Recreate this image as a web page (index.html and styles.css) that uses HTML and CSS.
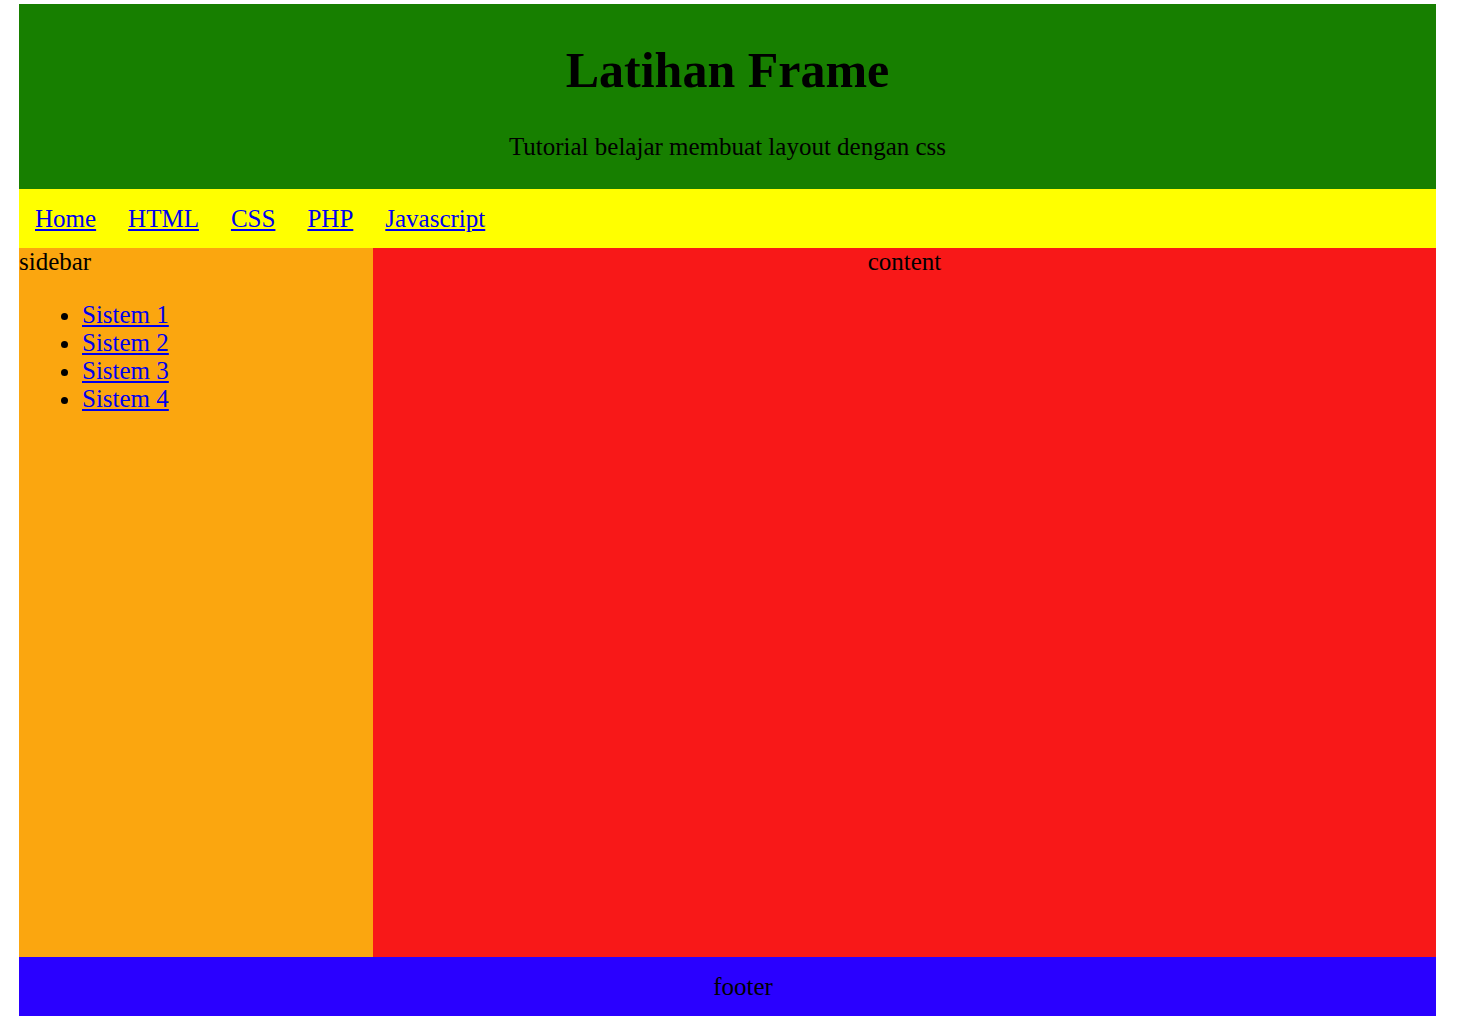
FILE: index.html
```html
<!DOCTYPE html>
<html lang="id">

<head>
    <meta charset="UTF-8">
    <meta name="viewport" content="width=device-width, initial-scale=1.0">
    <title>Latihan Frame</title>
    <link rel="stylesheet" href="styles.css">
</head>

<body>
    <div class="container">
        <div class="header">
            <h1>Latihan Frame</h1>
            <p>Tutorial belajar membuat layout dengan css</p>
        </div>
        <div class="menu">
            <a href="#">Home</a>
            <a href="#">HTML</a>
            <a href="#">CSS</a>
            <a href="#">PHP</a>
            <a href="#">Javascript</a>
        </div>
        <div class="main">
            <div class="sidebar">
                sidebar
                <ul>
                    <li><a href="#">Sistem 1</a></li>
                    <li><a href="#">Sistem 2</a></li>
                    <li><a href="#">Sistem 3</a></li>
                    <li><a href="#">Sistem 4</a></li>
                </ul>
            </div>
            <div class="content">content</div>
        </div>
        <div class="footer">footer</div>
    </div>
</body>

</html>
```

FILE: styles.css
```css
body {
    font-family: "Liberation Serif", "Times New Roman", serif;
    font-size: 25px;
    margin: 0;
    padding: 4px 21px 0 19px;
}

a {
    color: #0000ee;
}

.container {
    width: 1417px;
}

.header {
    background-color: #177f00;
    text-align: center;
    height: 185px;
    box-sizing: border-box;
    padding-top: 37px;
}

.header h1 {
    font-size: 50px;
    margin: 0;
}

.header p {
    margin: 34px 0 0;
}

.menu {
    background-color: #ffff00;
    display: flex;
    align-items: center;
    gap: 32px;
    height: 59px;
    padding: 0 16px;
    box-sizing: border-box;
}

.main {
    display: flex;
    height: 709px;
}

.sidebar {
    width: 354px;
    background-color: #fba60f;
}

.sidebar ul {
    margin: 25px 0;
    padding-left: 63px;
}

.content {
    flex: 1;
    background-color: #f81818;
    text-align: center;
}

.footer {
    background-color: #2a00ff;
    text-align: center;
    line-height: 29px;
    padding: 15px 0 15px 31px;
}
```
